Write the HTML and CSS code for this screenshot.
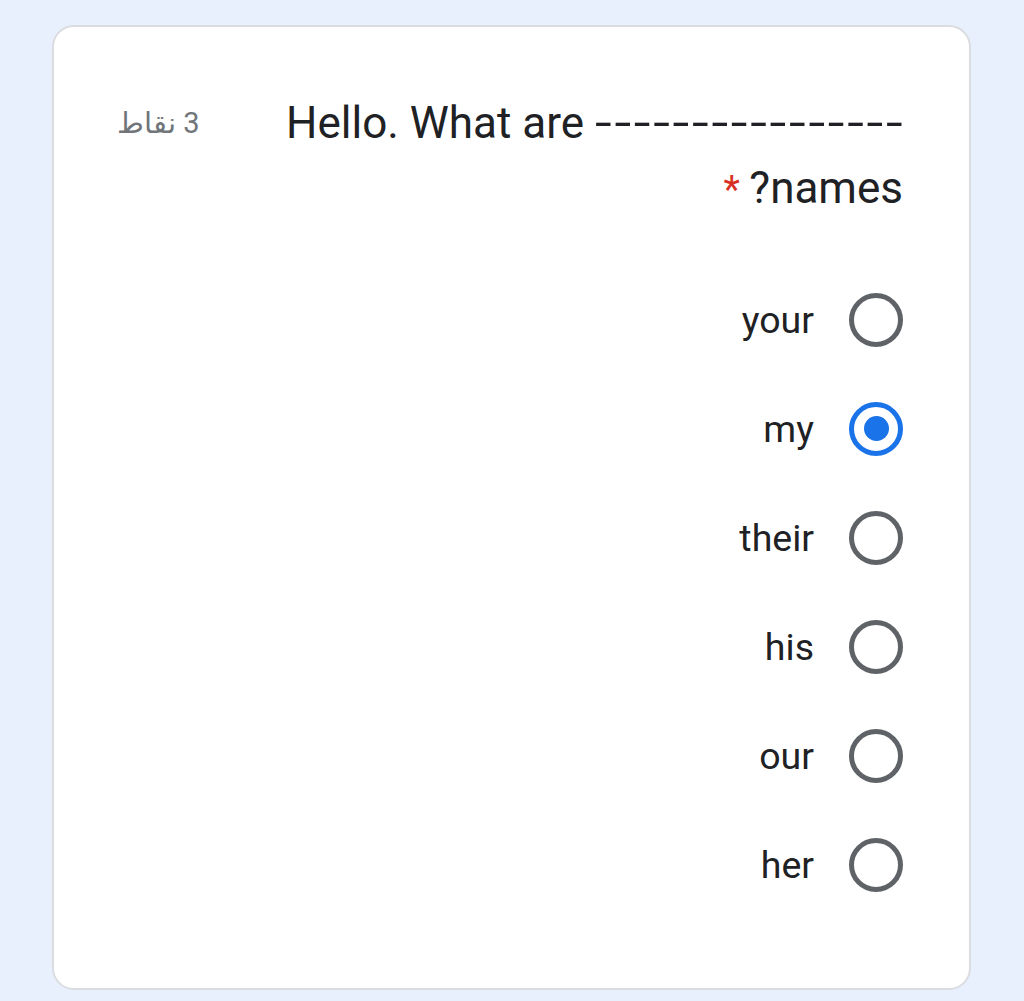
FILE: index.html
```html
<!DOCTYPE html>
<html lang="ar" dir="rtl">
<head>
<meta charset="utf-8">
<link rel="stylesheet" href="styles.css">
</head>
<body>
<div class="card">
  <div class="header">
    <div class="title">Hello. What are <span class="dashes"><span class="dashes-inner">----------------</span></span> names?<span class="req"> *</span></div>
    <div class="points">3 نقاط</div>
  </div>
  <div class="options">
    <div class="option"><span class="radio"></span><span class="label">your</span></div>
    <div class="option"><span class="radio checked"></span><span class="label">my</span></div>
    <div class="option"><span class="radio"></span><span class="label">their</span></div>
    <div class="option"><span class="radio"></span><span class="label">his</span></div>
    <div class="option"><span class="radio"></span><span class="label">our</span></div>
    <div class="option"><span class="radio"></span><span class="label">her</span></div>
  </div>
</div>
</body>
</html>
```

FILE: styles.css
```css
html, body {
  margin: 0;
  padding: 0;
}
body {
  background: #e8f0fe;
  font-family: Roboto, "Noto Sans", Arial, sans-serif;
  padding: 25px 53px 0 0;
  height: 1001px;
  box-sizing: border-box;
  overflow: hidden;
}
.card {
  width: 919px;
  box-sizing: border-box;
  background: #fff;
  border: 2px solid #dadce0;
  border-radius: 22px;
  padding: 64px 66px 69px 63px;
}
.header {
  display: flex;
  align-items: flex-start;
  gap: 60px;
}
.title {
  flex: 1;
  font-size: 44px;
  line-height: 65px;
  color: #202124;
}
.dashes {
  display: inline-block;
  direction: ltr;
  width: 308px;
  white-space: nowrap;
}
.dashes-inner {
  display: inline-block;
  letter-spacing: 2px;
  transform: scaleX(1.37);
  transform-origin: left center;
}
.req {
  color: #d93025;
  font-size: 38px;
}
.points {
  font-size: 29px;
  line-height: 65px;
  color: #70757a;
  white-space: nowrap;
}
.options {
  margin-top: 42px;
  display: flex;
  flex-direction: column;
}
.option {
  height: 109px;
  display: flex;
  align-items: center;
  gap: 35px;
}
.radio {
  width: 54px;
  height: 54px;
  box-sizing: border-box;
  border: 5.5px solid #5f6368;
  border-radius: 50%;
  display: flex;
  align-items: center;
  justify-content: center;
  flex-shrink: 0;
}
.radio.checked {
  border-color: #1a73e8;
}
.radio.checked::after {
  content: "";
  width: 25px;
  height: 25px;
  border-radius: 50%;
  background: #1a73e8;
}
.label {
  font-size: 37.5px;
  color: #202124;
}
```
